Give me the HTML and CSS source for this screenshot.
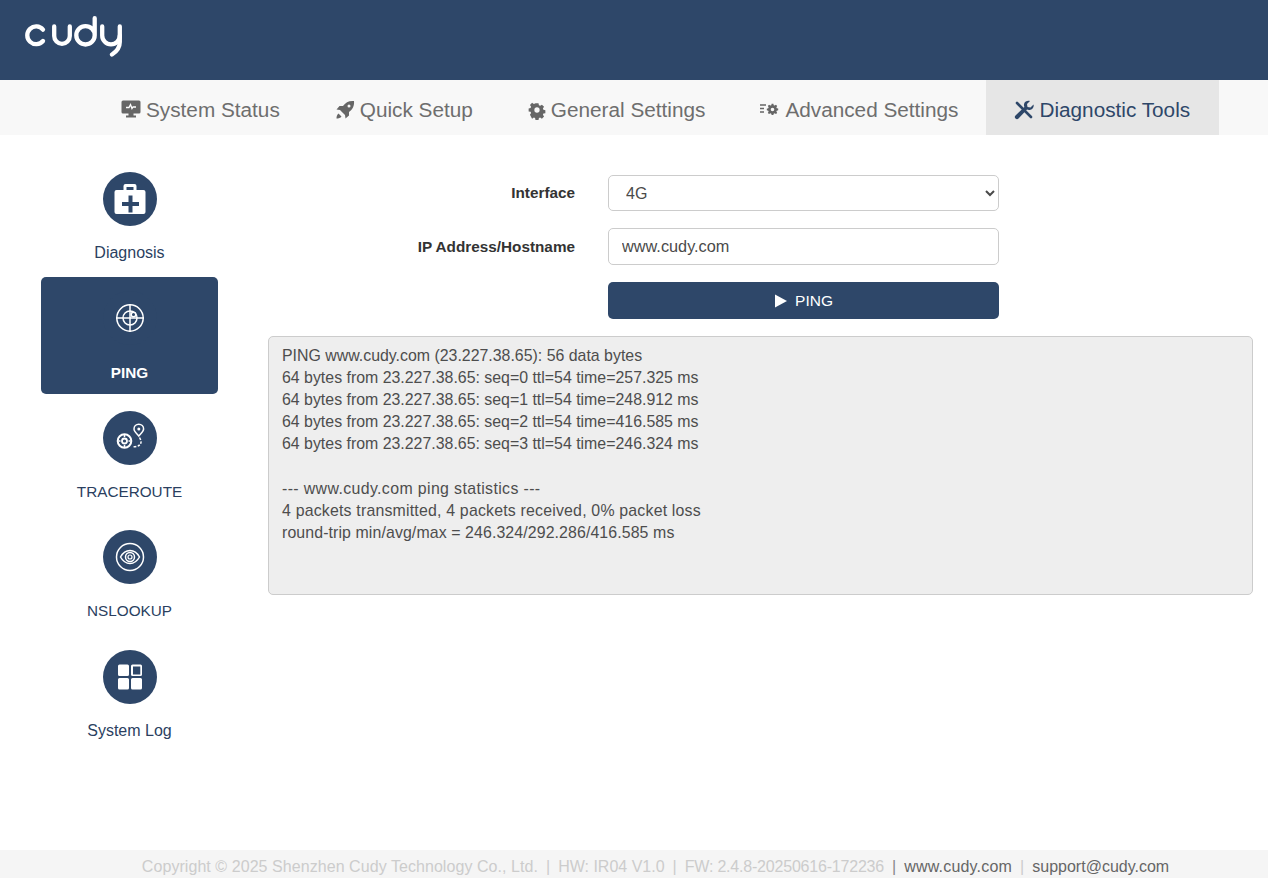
FILE: index.html
```html
<!DOCTYPE html>
<html lang="en">
<head>
<meta charset="utf-8">
<title>Cudy - PING</title>
<link rel="stylesheet" href="styles.css">
</head>
<body>
<header class="topbar">
  <svg class="logo" viewBox="0 0 98 41" width="98" height="41" fill="none" stroke="#fff" stroke-width="4.300" stroke-linecap="round" stroke-linejoin="round">
    <path d="M18 13.600A8.900 8.900 0 1 0 18 25"/>
    <path d="M29.200 10.500V20A7.800 7.800 0 0 0 44.800 20V10.500"/>
    <path d="M69.700 2.200V19.300A9.200 9.200 0 1 1 60.500 10.100 9.200 9.200 0 0 1 69.700 19.300"/>
    <path d="M77.200 10.500V19.500A8.800 8.800 0 0 0 94.800 19.500"/>
    <path d="M94.800 10.500V26C94.800 32 91 36 87 38.500"/>
  </svg>
</header>
<nav class="mainnav">
  <a class="navitem">
    <svg class="navicon" viewBox="0 0 20 20" width="20" height="20"><path fill="#666" fill-rule="evenodd" d="M2 .500h16a1.500 1.500 0 0 1 1.500 1.500v10a1.500 1.500 0 0 1-1.500 1.500h-5.500v2h2.500v2H5v-2h2.500v-2H2A1.500 1.500 0 0 1 .5 12V2A1.500 1.500 0 0 1 2 .5Z"/><path fill="none" stroke="#fff" stroke-width="1.300" d="M5 7.500H8L9.500 4.500 11 8.500 12 7H15"/></svg>
    System Status</a>
  <a class="navitem">
    <svg class="navicon" viewBox="0 0 20 20" width="20" height="20"><path fill="#666" fill-rule="evenodd" d="M19 1c-5-.5-8.500 1.500-11 5H4.500L1.500 9.500 5 10l5 5 .5 3.500 3.500-3V12c3.500-2.500 5.500-6 5-11ZM14 4.500a1.500 1.500 0 1 1 0 3 1.500 1.500 0 0 1 0-3ZM3.500 13.500c-1.500 1-2 3-2 5 2 0 4-.5 5-2Z"/></svg>
    Quick Setup</a>
  <a class="navitem">
    <svg class="navicon" viewBox="0 0 18 20" width="18" height="20"><path transform="translate(9 10) scale(.88) translate(-10 -9.200)" fill="#666" fill-rule="evenodd" d="M8.300 1.500h3.400l.5 2.300 1.400.6 2-1.300 2.400 2.400-1.300 2 .6 1.400 2.200.5v3.400l-2.200.5-.6 1.400 1.300 2-2.400 2.400-2-1.300-1.400.6-.5 2.200H8.300l-.5-2.200-1.400-.6-2 1.300L2 14.700l1.300-2-.6-1.400L.5 10.800V7.400l2.200-.5.6-1.400-1.300-2L4.400 1.100l2 1.300 1.400-.6ZM10 6.200a3 3 0 1 0 0 6 3 3 0 0 0 0-6Z"/></svg>
    General Settings</a>
  <a class="navitem">
    <svg class="navicon" viewBox="0 0 20 20" width="20" height="20"><path fill="none" stroke="#666" stroke-width="1.400" d="M0 5H6M0 8.500H4M0 12H4"/><path transform="translate(12.500 9.500) scale(.72) translate(-13 -11)" fill="#666" fill-rule="evenodd" d="M11.800 3h2.400l.5 2 1.300.5 1.800-1.100 1.700 1.700-1.100 1.800.5 1.300 2 .5v2.400l-2 .5-.5 1.300 1.100 1.800-1.700 1.700-1.800-1.100-1.300.5-.5 2h-2.400l-.5-2-1.300-.5-1.800 1.100-1.700-1.700 1.100-1.800-.5-1.300-2-.5V9.800l2-.5.5-1.300-1.100-1.800 1.700-1.700 1.800 1.100 1.300-.5ZM13 8.500a2.500 2.500 0 1 0 0 5 2.500 2.500 0 0 0 0-5Z"/></svg>
    Advanced Settings</a>
  <a class="navitem is-active">
    <svg class="navicon" viewBox="0 0 20 20" width="20" height="20"><path fill="none" stroke="#2e4769" stroke-width="2.600" stroke-linecap="round" d="M3 3 17 17"/><path fill="#2e4769" d="M19.500 4.500 16.500 7.500 13.500 7 13 4 16 1c-2.500-.8-5 .3-5.800 2.500-.4 1.200-.3 2.500.2 3.500L1.500 15.500a2 2 0 0 0 3 3L13 9.500c1 .5 2.300.6 3.500.2 2.300-.8 3.700-3 3-5.200Z"/></svg>
    Diagnostic Tools</a>
</nav>
<main class="layout">
  <aside class="sidebar">
    <a class="sideitem">
      <span class="disc">
        <svg viewBox="0 0 32 32" width="32" height="32"><path fill="#fff" fill-rule="evenodd" d="M9.500 7V3A2 2 0 0 1 11.500 1h9a2 2 0 0 1 2 2v4H29.500a2 2 0 0 1 2 2v20a2 2 0 0 1-2 2H2.500a2 2 0 0 1-2-2V9a2 2 0 0 1 2-2ZM12.500 4v3h7V4ZM14.500 12.500v6.500H8v4h6.500v6.500h4V23H25v-4h-6.500v-6.500Z"/></svg>
      </span>
      <span class="sidelabel">Diagnosis</span>
    </a>
    <a class="sideitem is-active">
      <span class="disc">
        <svg viewBox="0 0 32 32" width="32" height="32" fill="none" stroke="#fff" stroke-width="1.500"><circle cx="16" cy="16" r="13.200"/><circle cx="16" cy="16" r="7"/><path d="M16 2V30M2 16H30"/><circle cx="19.500" cy="12.500" r="2.300" fill="#2e4769"/></svg>
      </span>
      <span class="sidelabel">PING</span>
    </a>
    <a class="sideitem">
      <span class="disc">
        <svg viewBox="0 0 32 32" width="32" height="32" fill="none" stroke="#fff" stroke-width="1.500"><circle cx="10.500" cy="19" r="6.800" stroke-width="2"/><circle cx="10.500" cy="19" r="2.500" stroke-width="1.800"/><path d="M10.500 13V15M10.500 23V25M4.500 19H6.500M14.500 19H16.500"/><path d="M24.800 14C22.300 11.200 20 9.500 20 7a4.800 4.800 0 0 1 9.600 0c0 2.500-2.300 4.200-4.800 7Z"/><circle cx="24.800" cy="7" r="1.500" fill="#fff" stroke="none"/><path stroke-dasharray="2.500 1.500" d="M25.500 15.500c1 2 1.500 3 1.500 4.500 0 3-3 4.800-7.500 4.800"/></svg>
      </span>
      <span class="sidelabel caps">TRACEROUTE</span>
    </a>
    <a class="sideitem">
      <span class="disc">
        <svg viewBox="0 0 32 32" width="32" height="32" fill="none" stroke="#fff" stroke-width="1.500"><circle cx="16" cy="16" r="13.500"/><path d="M6.500 16C9 11.500 12 9.500 16 9.500S23 11.500 25.500 16C23 20.500 20 22.500 16 22.500S9 20.500 6.500 16Z"/><circle cx="16" cy="16" r="4.500"/><circle cx="16" cy="16" r="2" stroke-width="1.200"/></svg>
      </span>
      <span class="sidelabel caps">NSLOOKUP</span>
    </a>
    <a class="sideitem">
      <span class="disc">
        <svg viewBox="0 0 32 32" width="32" height="32"><path fill="#fff" fill-rule="evenodd" d="M5.500 3.500h8a1.500 1.500 0 0 1 1.500 1.500v8.500a1.500 1.500 0 0 1-1.500 1.500h-8A1.500 1.500 0 0 1 4 13.500V5a1.500 1.500 0 0 1 1.500-1.500ZM18.500 3.500h8A1.500 1.500 0 0 1 28 5v8.500a1.500 1.500 0 0 1-1.500 1.500h-8a1.500 1.500 0 0 1-1.500-1.500V5a1.500 1.500 0 0 1 1.500-1.500ZM19 5.500v8h7.300v-8ZM5.500 17h8a1.500 1.500 0 0 1 1.500 1.500V27a1.500 1.500 0 0 1-1.500 1.500h-8A1.500 1.500 0 0 1 4 27v-8.500A1.500 1.500 0 0 1 5.500 17ZM18.500 17h8a1.500 1.500 0 0 1 1.500 1.500V27a1.500 1.500 0 0 1-1.500 1.500h-8A1.500 1.500 0 0 1 17 27v-8.500a1.500 1.500 0 0 1 1.500-1.500Z"/></svg>
      </span>
      <span class="sidelabel">System Log</span>
    </a>
  </aside>
  <section class="content">
    <form class="form">
      <div class="row">
        <label class="label" for="iface">Interface</label>
        <select id="iface" class="control select"><option>4G</option></select>
      </div>
      <div class="row">
        <label class="label" for="host">IP Address/Hostname</label>
        <input id="host" class="control input" type="text" value="www.cudy.com">
      </div>
      <div class="row">
        <span class="label"></span>
        <button type="button" class="button"><svg viewBox="0 0 14 14" width="14" height="14"><path fill="#fff" d="M1 .5 13 7 1 13.500Z"/></svg>PING</button>
      </div>
    </form>
    <pre class="output">PING www.cudy.com (23.227.38.65): 56 data bytes
64 bytes from 23.227.38.65: seq=0 ttl=54 time=257.325 ms
64 bytes from 23.227.38.65: seq=1 ttl=54 time=248.912 ms
64 bytes from 23.227.38.65: seq=2 ttl=54 time=416.585 ms
64 bytes from 23.227.38.65: seq=3 ttl=54 time=246.324 ms

<span class="stat-head">--- www.cudy.com ping statistics ---</span>
<span class="stat-loss">4 packets transmitted, 4 packets received, 0% packet loss</span>
<span class="stat-rtt">round-trip min/avg/max = 246.324/292.286/416.585 ms</span></pre>
  </section>
</main>
<footer class="footer">
  <span class="muted copy">Copyright © 2025 Shenzhen Cudy Technology Co., Ltd.</span><span class="sep">|</span><span class="muted">HW: IR04 V1.0</span><span class="sep">|</span><span class="muted fw">FW: 2.4.8-20250616-172236</span><span class="sep dark">|</span><a class="link web">www.cudy.com</a><span class="sep">|</span><a class="link">support@cudy.com</a>
</footer>
</body>
</html>
```

FILE: styles.css
```css
* { box-sizing: border-box; }
html, body { height: 100%; }
body {
  margin: 0;
  display: flex;
  flex-direction: column;
  font-family: "Liberation Sans", Arial, sans-serif;
  font-size: 16px;
  color: #444;
  background: #fff;
  overflow: hidden;
}
.topbar {
  height: 80px;
  flex: none;
  background: #2e4769;
  padding: 16px 0 0 25px;
}
.logo { display: block; }
.mainnav {
  height: 55px;
  flex: none;
  display: flex;
  background: #f8f8f8;
  padding-left: 93.500px;
}
.navitem {
  display: flex;
  align-items: center;
  gap: 5px;
  padding: 5px 27.500px 0;
  font-size: 20.750px;
  color: #6e6e6e;
}
.navitem.is-active {
  padding: 5px 28.500px 0;
  background: #e6e6e6;
  color: #2e4769;
}
.navicon { flex: none; }
.layout {
  flex: 1;
  display: flex;
  min-height: 0;
}
.sidebar {
  width: 268px;
  flex: none;
  padding: 22.500px 50px 0 41px;
  display: flex;
  flex-direction: column;
  gap: 2.500px;
}
.sideitem {
  height: 117px;
  flex: none;
  border-radius: 5px;
  display: flex;
  flex-direction: column;
  align-items: center;
  padding-top: 14px;
  color: #2b3f5f;
}
.sideitem.is-active {
  background: #2e4769;
  color: #fff;
  font-weight: 700;
}
.disc {
  width: 54px;
  height: 54px;
  border-radius: 50%;
  background: #2e4769;
  display: flex;
  align-items: center;
  justify-content: center;
  flex: none;
}
.sidelabel {
  margin-top: 17px;
  line-height: 20px;
}
.is-active .sidelabel {
  margin-top: 18px;
  font-size: 15.300px;
}
.sidelabel.caps { font-size: 15.300px; }
.content {
  flex: 1;
  min-width: 0;
  padding: 40px 15px 0 0;
}
.form {
  display: flex;
  flex-direction: column;
  gap: 17px;
}
.row {
  display: flex;
  align-items: center;
  gap: 33px;
}
.label {
  width: 307px;
  text-align: right;
  font-size: 15.300px;
  font-weight: 700;
  color: #333;
  flex: none;
}
.control {
  width: 391px;
  height: 37px;
  border: 1px solid #ccc;
  border-radius: 5px;
  background: #fff;
  color: #4a4a4a;
  font: 16px "Liberation Sans", Arial, sans-serif;
  padding: 0 13px;
}
.input { font-size: 16.300px; }
.select { height: 36px; }
.button {
  width: 391px;
  height: 37px;
  border: 0;
  border-radius: 5px;
  padding: 1px 0 0;
  background: #2e4769;
  color: #fff;
  font: 15.500px "Liberation Sans", Arial, sans-serif;
  display: flex;
  align-items: center;
  justify-content: center;
  gap: 7px;
}
.output {
  margin: 17px 0 0;
  height: 259px;
  padding: 8px 13px;
  background: #eee;
  border: 1px solid #ccc;
  border-radius: 5px;
  font: 15.900px/22.100px "Liberation Sans", Arial, sans-serif;
  color: #4d4d4d;
}
.stat-head { letter-spacing: .37px; }
.stat-loss { letter-spacing: .19px; }
.stat-rtt { letter-spacing: .1px; }
.footer {
  height: 28px;
  flex: none;
  background: #f5f5f5;
  display: flex;
  align-items: center;
  justify-content: center;
  padding: 5px 0 0 43px;
  font-size: 16px;
}
.muted { color: #ccc; }
.copy { letter-spacing: .06px; }
.fw { letter-spacing: -.2px; }
.link { color: #666; }
.web { letter-spacing: .2px; }
.sep { color: #ccc; margin: 0 8px; }
.sep.dark { color: #888; }
```
